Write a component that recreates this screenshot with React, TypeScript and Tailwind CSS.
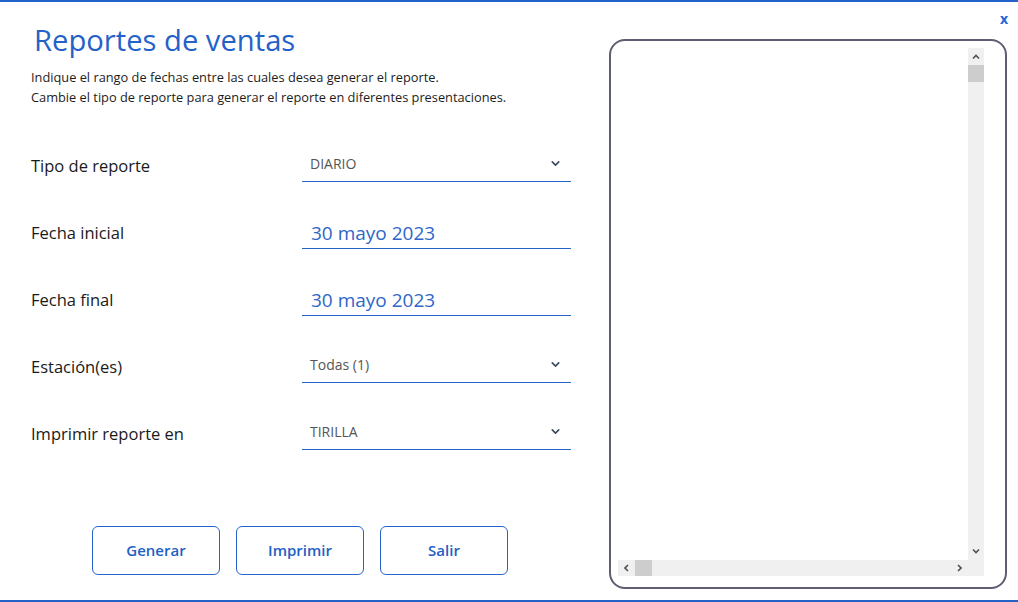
import { ChevronDown } from 'lucide-react';

const font = { fontFamily: '"Segoe UI", "Open Sans", sans-serif' };

function SelectField({ value }: { value: string }) {
  return (
    <div className="flex h-[34px] w-[269px] items-center justify-between border-b border-[#2563c7] pb-[2px] pl-2 pr-[9px]">
      <span className="text-[14px] text-[#555]">{value}</span>
      <ChevronDown size={13} strokeWidth={3} className="text-[#3b4a5e]" />
    </div>
  );
}

function DateField({ value }: { value: string }) {
  return (
    <div className="flex h-[34px] w-[269px] items-end border-b border-[#2563c7] pb-[2px] pl-[9px]">
      <span className="text-[19px] leading-[25px] text-[#2f66c9]">{value}</span>
    </div>
  );
}

function Row({ label, children }: { label: string; children: React.ReactNode }) {
  return (
    <div className="flex h-[67px] items-center">
      <span className="w-[271px] pt-[3px] text-[16.5px] text-[#1a1a1a]">{label}</span>
      {children}
    </div>
  );
}

function Btn({ label }: { label: string }) {
  return (
    <button className="h-[49px] w-[128px] rounded-[6px] border border-[#2563c7] bg-white text-[15px] font-semibold text-[#2160c4]">
      {label}
    </button>
  );
}

export default function App() {
  return (
    <div
      style={font}
      className="relative flex h-[602px] w-[1018px] border-y-2 border-[#2461c8] bg-white"
    >
      <span className="absolute right-[10px] top-[6px] text-[14px] font-bold text-[#2563d6]">x</span>

      <div className="flex w-[600px] flex-col pl-[31px]">
        <h1 className="mt-[18px] pl-[3px] text-[29.2px] leading-[40px] text-[#2462c9]">Reportes de ventas</h1>
        <div className="mt-[7px] text-[12.8px] leading-[20px] text-[#1c1c1c]">
          <p>Indique el rango de fechas entre las cuales desea generar el reporte.</p>
          <p>Cambie el tipo de reporte para generar el reporte en diferentes presentaciones.</p>
        </div>

        <div className="mt-[24px] flex flex-col">
          <Row label="Tipo de reporte">
            <SelectField value="DIARIO" />
          </Row>
          <Row label="Fecha inicial">
            <DateField value="30 mayo 2023" />
          </Row>
          <Row label="Fecha final">
            <DateField value="30 mayo 2023" />
          </Row>
          <Row label="Estación(es)">
            <SelectField value="Todas (1)" />
          </Row>
          <Row label="Imprimir reporte en">
            <SelectField value="TIRILLA" />
          </Row>
        </div>

        <div className="mt-[60px] flex gap-4 pl-[61px]">
          <Btn label="Generar" />
          <Btn label="Imprimir" />
          <Btn label="Salir" />
        </div>
      </div>

      <div className="ml-[9px] mt-[37px] h-[550px] w-[398px] rounded-[16px] border-2 border-[#5f5d72] px-[7px] pt-[7px]">
        <div className="flex h-[528px] w-[366px] flex-col">
          <div className="flex flex-1">
            <div className="flex-1 bg-white" />
            <div className="flex w-[16px] flex-col bg-[#f0f0f0]">
              <div className="flex h-[17px] items-center justify-center text-[#555]">
                <svg width="8" height="5" viewBox="0 0 8 5"><path d="M1 4.5 L4 1.5 L7 4.5" fill="none" stroke="#505050" strokeWidth="1.6" /></svg>
              </div>
              <div className="h-[17px] bg-[#cdcdcd]" />
              <div className="flex-1" />
              <div className="flex h-[17px] items-center justify-center">
                <svg width="8" height="5" viewBox="0 0 8 5"><path d="M1 0.5 L4 3.5 L7 0.5" fill="none" stroke="#505050" strokeWidth="1.6" /></svg>
              </div>
            </div>
          </div>
          <div className="flex h-[16px] bg-[#f0f0f0]">
            <div className="flex w-[17px] items-center justify-center">
              <svg width="5" height="8" viewBox="0 0 5 8"><path d="M4 1 L1 4 L4 7" fill="none" stroke="#505050" strokeWidth="1.6" /></svg>
            </div>
            <div className="w-[17px] bg-[#cdcdcd]" />
            <div className="flex-1" />
            <div className="flex w-[17px] items-center justify-center">
              <svg width="5" height="8" viewBox="0 0 5 8"><path d="M1 1 L4 4 L1 7" fill="none" stroke="#505050" strokeWidth="1.6" /></svg>
            </div>
            <div className="w-[16px]" />
          </div>
        </div>
      </div>
    </div>
  );
}
